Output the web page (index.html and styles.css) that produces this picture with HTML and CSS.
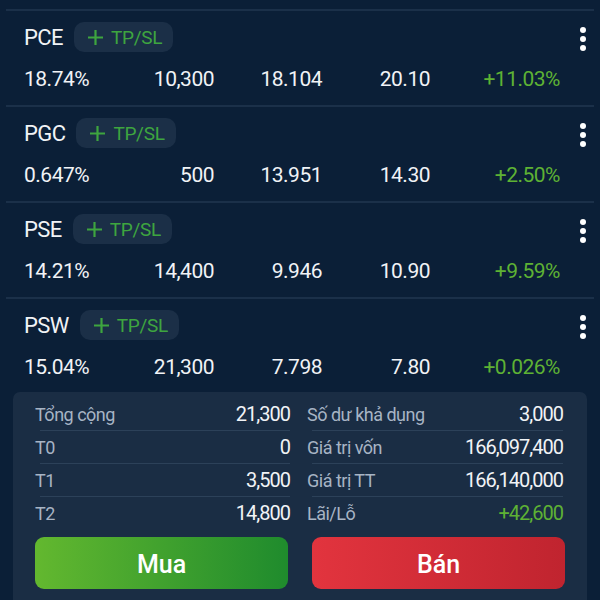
FILE: index.html
```html
<!DOCTYPE html>
<html lang="vi">
  <head>
    <meta charset="UTF-8" />
    <meta name="viewport" content="width=device-width, initial-scale=1.0" />
    <title>Danh mục</title>
    <link rel="stylesheet" href="styles.css">
  </head>
  <body>
    <div class="portfolio">
      <div class="stock-list">
        <div class="stock-row">
          <div class="stock-head">
            <span class="symbol">PCE</span>
            <button class="tpsl-btn"><svg class="plus" width="15" height="15" viewBox="0 0 15 15"><path d="M7.5 0v15M0 7.5h15"/></svg>TP/SL</button>
            <svg class="more" width="6" height="24" viewBox="0 0 6 24"><circle cx="3" cy="3" r="3"/><circle cx="3" cy="12" r="3"/><circle cx="3" cy="21" r="3"/></svg>
          </div>
          <div class="stock-data">
            <span class="left">18.74%</span>
            <span>10,300</span>
            <span>18.104</span>
            <span>20.10</span>
            <span class="up">+11.03%</span>
          </div>
        </div>
        <div class="stock-row">
          <div class="stock-head">
            <span class="symbol">PGC</span>
            <button class="tpsl-btn"><svg class="plus" width="15" height="15" viewBox="0 0 15 15"><path d="M7.5 0v15M0 7.5h15"/></svg>TP/SL</button>
            <svg class="more" width="6" height="24" viewBox="0 0 6 24"><circle cx="3" cy="3" r="3"/><circle cx="3" cy="12" r="3"/><circle cx="3" cy="21" r="3"/></svg>
          </div>
          <div class="stock-data">
            <span class="left">0.647%</span>
            <span>500</span>
            <span>13.951</span>
            <span>14.30</span>
            <span class="up">+2.50%</span>
          </div>
        </div>
        <div class="stock-row">
          <div class="stock-head">
            <span class="symbol">PSE</span>
            <button class="tpsl-btn"><svg class="plus" width="15" height="15" viewBox="0 0 15 15"><path d="M7.5 0v15M0 7.5h15"/></svg>TP/SL</button>
            <svg class="more" width="6" height="24" viewBox="0 0 6 24"><circle cx="3" cy="3" r="3"/><circle cx="3" cy="12" r="3"/><circle cx="3" cy="21" r="3"/></svg>
          </div>
          <div class="stock-data">
            <span class="left">14.21%</span>
            <span>14,400</span>
            <span>9.946</span>
            <span>10.90</span>
            <span class="up">+9.59%</span>
          </div>
        </div>
        <div class="stock-row">
          <div class="stock-head">
            <span class="symbol">PSW</span>
            <button class="tpsl-btn"><svg class="plus" width="15" height="15" viewBox="0 0 15 15"><path d="M7.5 0v15M0 7.5h15"/></svg>TP/SL</button>
            <svg class="more" width="6" height="24" viewBox="0 0 6 24"><circle cx="3" cy="3" r="3"/><circle cx="3" cy="12" r="3"/><circle cx="3" cy="21" r="3"/></svg>
          </div>
          <div class="stock-data">
            <span class="left">15.04%</span>
            <span>21,300</span>
            <span>7.798</span>
            <span>7.80</span>
            <span class="up">+0.026%</span>
          </div>
        </div>
      </div>

      <div class="summary">
        <div class="summary-grid">
          <div class="summary-col">
            <div class="summary-row"><span class="label">Tổng cộng</span><span class="value">21,300</span></div>
            <div class="summary-row"><span class="label">T0</span><span class="value">0</span></div>
            <div class="summary-row"><span class="label">T1</span><span class="value">3,500</span></div>
            <div class="summary-row last"><span class="label">T2</span><span class="value">14,800</span></div>
          </div>
          <div class="summary-col">
            <div class="summary-row"><span class="label">Số dư khả dụng</span><span class="value">3,000</span></div>
            <div class="summary-row"><span class="label">Giá trị vốn</span><span class="value">166,097,400</span></div>
            <div class="summary-row"><span class="label">Giá trị TT</span><span class="value">166,140,000</span></div>
            <div class="summary-row last"><span class="label">Lãi/Lỗ</span><span class="value up">+42,600</span></div>
          </div>
        </div>
        <div class="actions">
          <button class="action-btn buy">Mua</button>
          <button class="action-btn sell">Bán</button>
        </div>
      </div>
    </div>
  </body>
</html>
```

FILE: styles.css
```css
body {
  margin: 0;
  font-family: Roboto, "Liberation Sans", sans-serif;
  background-color: #0b1f37;
  color: #f1f3f6;
}

.portfolio {
  width: 600px;
  height: 600px;
  overflow: hidden;
}

.stock-list {
  padding: 9px 6px 0;
}

.stock-row {
  border-top: 2px solid #1b3049;
  padding: 11px 8px 11px 18px;
}

.stock-head {
  display: flex;
  align-items: center;
  height: 30px;
}

.symbol {
  font-size: 22px;
  letter-spacing: -0.6px;
}

.tpsl-btn {
  display: flex;
  align-items: center;
  height: 30px;
  margin-left: 11px;
  padding: 0 11px 0 14px;
  border: none;
  border-radius: 10px;
  background: #1b2f47;
  color: #3ea53f;
  font-family: inherit;
  font-size: 19px;
  letter-spacing: -0.3px;
}

.tpsl-btn .plus {
  stroke: #3ea53f;
  stroke-width: 2.2;
  margin-right: 8px;
}

.more {
  margin-left: auto;
  margin-top: 4px;
  fill: #ffffff;
}

.stock-data {
  display: grid;
  grid-template-columns: 80px 110px 108px 108px 130px;
  margin-top: 12px;
  height: 30px;
  line-height: 30px;
  font-size: 21px;
  letter-spacing: -0.5px;
  text-align: right;
}

.stock-data .left {
  text-align: left;
}

.up {
  color: #5eb234;
}

.summary {
  margin: -1px 13px 0;
  padding: 6px 24px 0 22px;
  background: #1a2d44;
  border-radius: 7px 7px 0 0;
  height: 220px;
}

.summary-grid {
  display: grid;
  grid-template-columns: 255px 256px;
  column-gap: 17px;
}

.summary-row {
  display: flex;
  justify-content: space-between;
  align-items: center;
  height: 32px;
  border-bottom: 1px solid #2c4159;
  margin-left: 5px;
}

.summary-row .label {
  margin-left: -5px;
  color: #a7b4c4;
  font-size: 18px;
  letter-spacing: -0.5px;
}

.summary-row .value {
  font-size: 20px;
  letter-spacing: -1px;
}

.summary-row.last {
  border-bottom: none;
}

.summary-row .value.up {
  color: #5eb234;
}

.actions {
  display: grid;
  grid-template-columns: 253px 253px;
  column-gap: 24px;
  margin-top: 8px;
}

.action-btn {
  height: 52px;
  border: none;
  border-radius: 9px;
  color: #ffffff;
  font-family: inherit;
  font-size: 25px;
  font-weight: 500;
  padding-top: 4px;
}

.buy {
  background: linear-gradient(to right, #63b82f, #1f8b2d);
}

.sell {
  background: linear-gradient(to right, #e2343e, #c0242f);
}
```
